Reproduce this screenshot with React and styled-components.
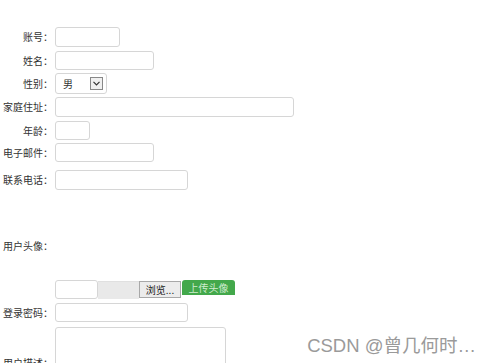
import React from "react";
import styled, { createGlobalStyle } from "styled-components";

const GlobalStyle = createGlobalStyle`
    html, body {
        margin: 0;
        padding: 0;
        background: #fff;
        overflow: hidden;
    }
    body {
        font-family: "Noto Sans CJK SC", "Liberation Sans", sans-serif;
        font-size: 10px;
        color: #333;
    }
`;

const Page = styled.div`
    position: relative;
    width: 488px;
    height: 363px;
    overflow: hidden;
`;

const Form = styled.div`
    display: flex;
    flex-direction: column;
    padding-top: 27px;
`;

const Row = styled.div`
    display: flex;
    align-items: ${(props) => props.align || "center"};
    margin-top: ${(props) => props.top || 0}px;
    height: ${(props) => props.height || "auto"};
`;

const Label = styled.label`
    width: 53px;
    flex-shrink: 0;
    text-align: right;
    margin-right: 2px;
    white-space: nowrap;
    line-height: 12px;
    padding-bottom: ${(props) => props.pb || 0}px;
`;

const Input = styled.input`
    box-sizing: border-box;
    width: ${(props) => props.w}px;
    height: ${(props) => props.h || 20}px;
    border: 1px solid #d6d6d6;
    border-radius: 3px;
    padding: 0 4px;
    margin: 0;
    font-size: 10px;
    outline: none;
`;

const SelectBox = styled.div`
    box-sizing: border-box;
    width: 52px;
    height: 21px;
    border: 1px solid #d6d6d6;
    border-radius: 3px;
    display: flex;
    align-items: center;
    padding-left: 7px;
    gap: 17px;
`;

const Arrow = styled.div`
    box-sizing: border-box;
    width: 13px;
    height: 13px;
    border: 1px solid #888;
    background: #f0f0f0;
    display: flex;
    align-items: center;
    justify-content: center;
`;

const FileGroup = styled.div`
    display: flex;
    align-items: flex-start;
`;

const FileName = styled.div`
    box-sizing: border-box;
    width: 41px;
    height: 18px;
    margin-top: 1px;
    background: #e9e9e9;
    border-top: 1px solid #e0e0e0;
`;

const Browse = styled.button`
    box-sizing: border-box;
    width: 42px;
    height: 17px;
    margin: 1px 0 0 0;
    padding: 0;
    border: 1px solid #a8a8a8;
    background: #ececec;
    font-family: inherit;
    font-size: 10px;
    color: #222;
    line-height: 14px;
`;

const Upload = styled.button`
    box-sizing: border-box;
    width: 53px;
    height: 15px;
    margin: 0 0 0 1px;
    padding: 0;
    border: none;
    border-radius: 3px 3px 0 0;
    background: #43a84b;
    color: #cfeccf;
    font-family: inherit;
    font-size: 10px;
    line-height: 15px;
`;

const TextArea = styled.textarea`
    box-sizing: border-box;
    width: 171px;
    height: 44px;
    border: 1px solid #d6d6d6;
    border-radius: 3px;
    margin: 0;
    resize: none;
    outline: none;
`;

const Watermark = styled.div`
    position: absolute;
    right: 12px;
    bottom: 6px;
    font-family: "Liberation Sans", "Noto Sans CJK SC", sans-serif;
    font-size: 18.5px;
    color: #9a9a9a;
    text-shadow: 0 0 2px #fff;
`;

function App() {
    return (
        <Page>
            <GlobalStyle />
            <Form>
                <Row>
                    <Label>账号：</Label>
                    <Input w={65} />
                </Row>
                <Row top={4}>
                    <Label>姓名：</Label>
                    <Input w={99} h={19} />
                </Row>
                <Row top={3}>
                    <Label>性别：</Label>
                    <SelectBox>
                        <span>男</span>
                        <Arrow>
                            <svg width="7" height="5" viewBox="0 0 7 5">
                                <path d="M0.5 0.8 L3.5 3.8 L6.5 0.8" fill="none" stroke="#333" strokeWidth="1.2" />
                            </svg>
                        </Arrow>
                    </SelectBox>
                </Row>
                <Row top={3}>
                    <Label>家庭住址：</Label>
                    <Input w={239} />
                </Row>
                <Row top={4}>
                    <Label>年龄：</Label>
                    <Input w={35} h={19} />
                </Row>
                <Row top={3}>
                    <Label>电子邮件：</Label>
                    <Input w={99} h={19} />
                </Row>
                <Row top={8}>
                    <Label>联系电话：</Label>
                    <Input w={133} />
                </Row>
                <Row top={22} height="68px">
                    <Label>用户头像：</Label>
                </Row>
                <Row align="flex-start">
                    <Label />
                    <FileGroup>
                        <Input w={43} h={19} />
                        <FileName />
                        <Browse>浏览...</Browse>
                        <Upload>上传头像</Upload>
                    </FileGroup>
                </Row>
                <Row top={4}>
                    <Label>登录密码：</Label>
                    <Input w={133} h={19} />
                </Row>
                <Row top={5} align="flex-end">
                    <Label pb={2}>用户描述：</Label>
                    <TextArea />
                </Row>
            </Form>
            <Watermark>CSDN @曾几何时…</Watermark>
        </Page>
    );
}

export default App;
